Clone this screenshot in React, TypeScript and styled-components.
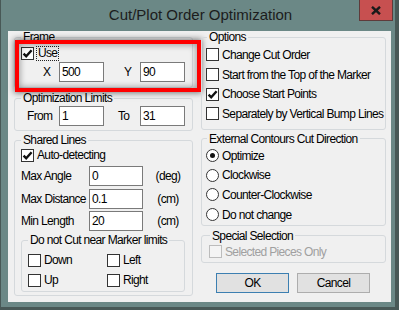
import styled, { createGlobalStyle } from "styled-components";

const UI_FONT = `"Liberation Sans", Arial, sans-serif`;

const GlobalStyle = createGlobalStyle`
	html, body {
		margin: 0;
		padding: 0;
		background: #485856;
	}
	body {
		width: 399px;
		height: 310px;
		overflow: hidden;
		font-family: ${UI_FONT};
		font-size: 12px;
		letter-spacing: -0.65px;
		color: #000;
	}
`;

function Tick() {
	return (
		<svg width="11" height="11" viewBox="0 0 11 11">
			<path d="M1.6 5.6 L4.2 8.3 L9.6 2.2" fill="none" stroke="#111" strokeWidth="2.4" />
		</svg>
	);
}

function Check({ checked, disabled }: { checked?: boolean; disabled?: boolean }) {
	return <CheckBox $disabled={disabled}>{checked && <Tick />}</CheckBox>;
}

export default function App() {
	return (
		<>
			<GlobalStyle />
			<Window>
				<TitleBar>
					<span />
					<Title>Cut/Plot Order Optimization</Title>
					<CloseButton>
						<svg width="10" height="9" viewBox="0 0 10 9">
							<path d="M1 0.8 L9 8.2 M9 0.8 L1 8.2" stroke="#1a1a1a" strokeWidth="2.4" />
						</svg>
					</CloseButton>
				</TitleBar>
				<Client>
					<Column>
						<Group $pt={3} $pb={5}>
							<Legend>Frame</Legend>
							<CheckRow $h={14}>
								<Check checked />
								<Focused>Use</Focused>
							</CheckRow>
							<PairGrid $mt={2}>
								<FieldLabel $indent={22}>X</FieldLabel>
								<TextBox>500</TextBox>
								<FieldLabel $indent={20}>Y</FieldLabel>
								<TextBox>90</TextBox>
							</PairGrid>
						</Group>
						<Group $mt={4} $pt={2} $pb={4}>
							<Legend>Optimization Limits</Legend>
							<PairGrid>
								<FieldLabel $indent={6}>From</FieldLabel>
								<TextBox>1</TextBox>
								<FieldLabel $indent={14}>To</FieldLabel>
								<TextBox>31</TextBox>
							</PairGrid>
						</Group>
						<Group $mt={3} $pt={2} $pb={3} $pr={0}>
							<Legend>Shared Lines</Legend>
							<CheckRow $h={14}>
								<Check checked />
								<span>Auto-detecting</span>
							</CheckRow>
							<MeasureGrid $mt={4}>
								<span>Max Angle</span>
								<TextBox $w={54}>0</TextBox>
								<Unit>(deg)</Unit>
							</MeasureGrid>
							<MeasureGrid $mt={3}>
								<span>Max Distance</span>
								<TextBox $w={54}>0.1</TextBox>
								<Unit>(cm)</Unit>
							</MeasureGrid>
							<MeasureGrid $mt={2}>
								<span>Min Length</span>
								<TextBox $w={54}>20</TextBox>
								<Unit>(cm)</Unit>
							</MeasureGrid>
							<SubGroup>
								<Legend>Do not Cut near Marker limits</Legend>
								<LimitsGrid>
									<CheckRow>
										<Check />
										<span>Down</span>
									</CheckRow>
									<CheckRow>
										<Check />
										<span>Left</span>
									</CheckRow>
									<CheckRow>
										<Check />
										<span>Up</span>
									</CheckRow>
									<CheckRow>
										<Check />
										<span>Right</span>
									</CheckRow>
								</LimitsGrid>
							</SubGroup>
						</Group>
						<Highlight />
					</Column>
					<Column>
						<Group $pl={4} $pt={2} $pb={5}>
							<RightLegend>Options</RightLegend>
							<CheckRow $h={19.7}>
								<Check />
								<span>Change Cut Order</span>
							</CheckRow>
							<CheckRow $h={19.7}>
								<Check />
								<span>Start from the Top of the Marker</span>
							</CheckRow>
							<CheckRow $h={19.7}>
								<Check checked />
								<span>Choose Start Points</span>
							</CheckRow>
							<CheckRow $h={19.7}>
								<Check />
								<span>Separately by Vertical Bump Lines</span>
							</CheckRow>
						</Group>
						<Group $mt={3} $pl={4} $pt={1} $pb={0}>
							<RightLegend>External Contours Cut Direction</RightLegend>
							<CheckRow $h={19.7}>
								<Radio $on />
								<span>Optimize</span>
							</CheckRow>
							<CheckRow $h={19.7}>
								<Radio />
								<span>Clockwise</span>
							</CheckRow>
							<CheckRow $h={19.7}>
								<Radio />
								<span>Counter-Clockwise</span>
							</CheckRow>
							<CheckRow $h={19.7}>
								<Radio />
								<span>Do not change</span>
							</CheckRow>
						</Group>
						<Group $mt={4} $pl={7} $pt={0} $pb={0}>
							<RightLegend>Special Selection</RightLegend>
							<CheckRow $disabled>
								<Check disabled />
								<span>Selected Pieces Only</span>
							</CheckRow>
						</Group>
						<ButtonRow>
							<Button $primary>OK</Button>
							<Button>Cancel</Button>
						</ButtonRow>
					</Column>
				</Client>
			</Window>
		</>
	);
}

const Window = styled.div`
	margin-left: 1px;
	width: 394px;
	height: 307px;
	background: #6b8886;
	display: flex;
	flex-direction: column;
`;

const TitleBar = styled.div`
	height: 31px;
	display: grid;
	grid-template-columns: 1fr auto 1fr;
	align-items: start;
`;

const Title = styled.div`
	font-size: 15px;
	letter-spacing: 0;
	line-height: 18px;
	padding: 6px 0 0 5px;
	color: #1c1c1c;
	white-space: nowrap;
`;

const CloseButton = styled.div`
	justify-self: end;
	margin-right: 2px;
	width: 32px;
	height: 20px;
	background: #c75050;
	border: 1px solid #5e3b3b;
	border-top: none;
	display: flex;
	align-items: center;
	justify-content: center;
`;

const Client = styled.div`
	margin-left: 7px;
	width: 383px;
	height: 271px;
	box-sizing: border-box;
	background: #f0f0f0;
	display: grid;
	grid-template-columns: 179px 185px;
	column-gap: 8px;
	padding-left: 6px;
`;

const Column = styled.div`
	position: relative;
	display: flex;
	flex-direction: column;
`;

const Group = styled.fieldset<{ $mt?: number; $pt?: number; $pb?: number; $pl?: number; $pr?: number }>`
	margin: ${({ $mt }) => $mt ?? 0}px 0 0 0;
	padding: ${({ $pt }) => $pt ?? 0}px ${({ $pr }) => $pr ?? 6}px ${({ $pb }) => $pb ?? 0}px
		${({ $pl }) => $pl ?? 6}px;
	border: 1px solid #d5d9dc;
	border-radius: 3px;
	min-width: 0;
	display: flex;
	flex-direction: column;
`;

const SubGroup = styled(Group)`
	margin: 3px 0 0 0;
	width: 164px;
	box-sizing: border-box;
	padding: 4px 0 1px 6px;
`;

const Legend = styled.legend`
	padding: 0 2px;
	line-height: 12px;
	height: 12px;
	white-space: nowrap;
`;

const RightLegend = styled(Legend)`
	margin-left: 1px;
`;

const CheckRow = styled.div<{ $h?: number; $disabled?: boolean }>`
	height: ${({ $h }) => $h ?? 20}px;
	display: flex;
	align-items: center;
	gap: 3px;
	white-space: nowrap;
	color: ${({ $disabled }) => ($disabled ? "#a0a0a0" : "#000")};
`;

const CheckBox = styled.span<{ $disabled?: boolean }>`
	flex: none;
	width: 13px;
	height: 13px;
	box-sizing: border-box;
	border: 1px solid ${({ $disabled }) => ($disabled ? "#bcbcbc" : "#333")};
	background: ${({ $disabled }) => ($disabled ? "#f4f4f4" : "#fff")};
	display: flex;
	align-items: center;
	justify-content: center;
`;

const Radio = styled.span<{ $on?: boolean }>`
	flex: none;
	width: 13px;
	height: 13px;
	box-sizing: border-box;
	border-radius: 50%;
	border: 1px solid #333;
	background: #fff;
	display: flex;
	align-items: center;
	justify-content: center;
	&::after {
		content: "";
		width: 5px;
		height: 5px;
		border-radius: 50%;
		background: ${({ $on }) => ($on ? "#111" : "transparent")};
	}
`;

const Focused = styled.span`
	outline: 1px dotted #222;
	padding: 0 1px;
	line-height: 13px;
`;

const PairGrid = styled.div<{ $mt?: number }>`
	margin-top: ${({ $mt }) => $mt ?? 0}px;
	display: grid;
	grid-template-columns: 38px 45px 36px 45px;
	align-items: center;
`;

const MeasureGrid = styled.div<{ $mt?: number }>`
	margin-top: ${({ $mt }) => $mt ?? 0}px;
	display: grid;
	grid-template-columns: 68px 54px 50px;
	align-items: center;
	white-space: nowrap;
`;

const LimitsGrid = styled.div`
	display: grid;
	grid-template-columns: 79px auto;
`;

const FieldLabel = styled.span<{ $indent: number }>`
	padding-left: ${({ $indent }) => $indent}px;
`;

const TextBox = styled.div<{ $w?: number }>`
	width: ${({ $w }) => $w ?? 45}px;
	height: 20px;
	box-sizing: border-box;
	border: 1px solid #7a7a7a;
	background: #fff;
	padding: 0 2px;
	line-height: 18px;
`;

const Unit = styled.span`
	text-align: center;
`;

const ButtonRow = styled.div`
	margin-top: 10px;
	padding-left: 15px;
	display: flex;
	gap: 8px;
`;

const Button = styled.div<{ $primary?: boolean }>`
	width: 73px;
	height: 20px;
	box-sizing: border-box;
	border: 1px solid ${({ $primary }) => ($primary ? "#3c7fb1" : "#adadad")};
	background: #e1e1e1;
	display: flex;
	align-items: center;
	justify-content: center;
`;

const Highlight = styled.div`
	position: absolute;
	left: 1px;
	top: 9px;
	width: 186px;
	height: 52px;
	box-sizing: border-box;
	border: 4px solid #ff0000;
	box-shadow: 0 0 6px 1px rgba(0, 0, 0, 0.5), inset 0 0 6px 1px rgba(0, 0, 0, 0.35);
	pointer-events: none;
`;
